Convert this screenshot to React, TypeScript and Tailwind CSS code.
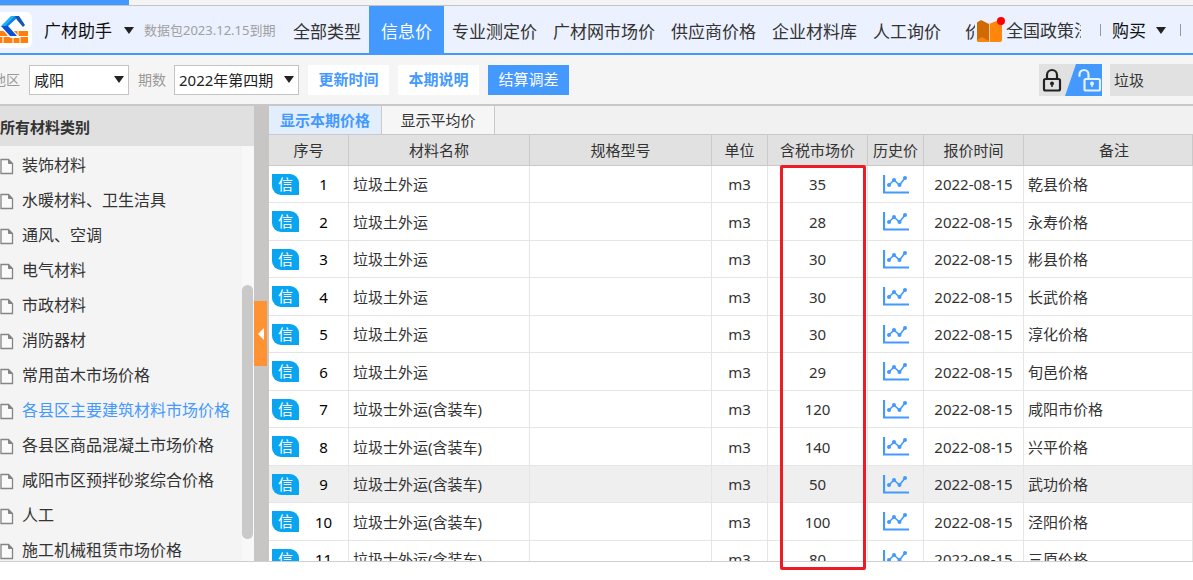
import { useState } from 'react';
import type { ReactNode } from 'react';

const navItems = ['全部类型', '信息价', '专业测定价', '广材网市场价', '供应商价格', '企业材料库', '人工询价'];

const categories = [
  '装饰材料',
  '水暖材料、卫生洁具',
  '通风、空调',
  '电气材料',
  '市政材料',
  '消防器材',
  '常用苗木市场价格',
  '各县区主要建筑材料市场价格',
  '各县区商品混凝土市场价格',
  '咸阳市区预拌砂浆综合价格',
  '人工',
  '施工机械租赁市场价格',
];

interface PriceRow {
  id: number;
  name: string;
  price: number;
  remark: string;
}

const rows: PriceRow[] = [
  { id: 1, name: '垃圾土外运', price: 35, remark: '乾县价格' },
  { id: 2, name: '垃圾土外运', price: 28, remark: '永寿价格' },
  { id: 3, name: '垃圾土外运', price: 30, remark: '彬县价格' },
  { id: 4, name: '垃圾土外运', price: 30, remark: '长武价格' },
  { id: 5, name: '垃圾土外运', price: 30, remark: '淳化价格' },
  { id: 6, name: '垃圾土外运', price: 29, remark: '旬邑价格' },
  { id: 7, name: '垃圾士外运(含装车)', price: 120, remark: '咸阳市价格' },
  { id: 8, name: '垃圾士外运(含装车)', price: 140, remark: '兴平价格' },
  { id: 9, name: '垃圾士外运(含装车)', price: 50, remark: '武功价格' },
  { id: 10, name: '垃圾士外运(含装车)', price: 100, remark: '泾阳价格' },
  { id: 11, name: '垃圾士外运(含装车)', price: 80, remark: '三原价格' },
];

function Caret({ className = '' }: { className?: string }) {
  return (
    <svg className={className} width="10" height="7" viewBox="0 0 10 7" aria-hidden="true">
      <path d="M0 0h10L5 7z" fill="#222" />
    </svg>
  );
}

function Logo() {
  return (
    <svg width="29" height="30" viewBox="0 0 29 30" aria-hidden="true">
      <path d="M0 16h28v12H0z" fill="#ff7f0e" />
      <path d="M0 21.5h28M8 16v5.5M18 16v5.5M3 21.5V28M13 21.5V28M20 21.5V28" stroke="#fff" strokeWidth="1" />
      <path d="M10 0h9L8 11l10 11h-7L0 11z" fill="#fff" stroke="#fff" strokeWidth="2" />
      <path d="M11 1h8L8 11H1z" fill="#1fb0f8" />
      <path d="M1 11h7l9 10h-7z" fill="#0a4fd6" />
      <path d="M15 1h4L8 11H5z" fill="#1280ea" />
      <path d="M15 1h4l6 9-2 2-6-7z" fill="#1257b5" />
    </svg>
  );
}

function BookIcon() {
  return (
    <svg width="29" height="28" viewBox="0 0 29 28" className="shrink-0" aria-hidden="true">
      <path d="M0 6.5L4 4l8 4v18H2q-2 0-2-2z" fill="#d06a05" />
      <path d="M12 8l10-4 3 3v17q0 2-2 2H12z" fill="#ff860d" />
      <path d="M0 24l5-3 7 4v1H2q-2 0-2-2z" fill="#f98510" />
      <path d="M12.5 8v18" stroke="#ffd09a" />
      <circle cx="24" cy="5" r="4" fill="#f00" />
    </svg>
  );
}

function FileIcon() {
  return (
    <svg width="14" height="17" viewBox="0 0 14 17" className="mt-1 shrink-0" aria-hidden="true">
      <path d="M1 1.5h7.5l4 4V15.500H1z" fill="#fafafa" stroke="#858585" strokeWidth="1.3" />
      <path d="M8.5 1.5v4h4z" fill="#858585" stroke="#858585" />
    </svg>
  );
}

function ChartIcon() {
  return (
    <svg width="26" height="19" viewBox="0 0 26 19" className="mx-auto" aria-hidden="true">
      <path d="M1 0v17.5h25" fill="none" stroke="#49f" strokeWidth="2.2" />
      <path d="M6 10l5-5 5.5 5L22 3" fill="none" stroke="#49f" strokeWidth="1.6" />
      <g fill="#49f">
        <circle cx="6" cy="10" r="2" />
        <circle cx="11" cy="5" r="2" />
        <circle cx="16.5" cy="10" r="2" />
        <circle cx="22" cy="3" r="2" />
      </g>
    </svg>
  );
}

function Picker({ id, className, children }: { id: string; className: string; children: ReactNode }) {
  return (
    <div className={`relative ${className}`}>
      <select id={id} className="h-[30px] w-full appearance-none border border-[#c4c4c4] bg-white pl-1 text-[15px] leading-5 text-[#222]">
        {children}
      </select>
      <Caret className="pointer-events-none absolute top-[11px] right-[5px]" />
    </div>
  );
}

function TopBar() {
  const [active, setActive] = useState('信息价');

  return (
    <header className="flex h-[50px] shrink-0 items-stretch overflow-hidden border-t border-b-2 border-t-[#c4c4c4] border-b-[#49f] bg-[#ebf1fe] text-[17px] whitespace-nowrap text-[#333]">
      <div className="flex w-[285px] shrink-0 items-center">
        <div className="flex h-9 w-8 shrink-0 items-center rounded-r-md bg-white">
          <Logo />
        </div>
        <button className="ml-3 flex items-center gap-3 pt-[2px] text-[#111]">
          广材助手
          <Caret />
        </button>
        <span className="ml-[10px] pt-[2px] text-[13px] text-[#a0a0a0]">数据包2023.12.15到期</span>
      </div>

      <nav className="flex shrink-0">
        {navItems.map((item) => (
          <a
            key={item}
            href="#"
            onClick={() => setActive(item)}
            className={`flex items-center pt-1 ${item === active ? 'bg-[#49f] px-3 text-white' : 'px-2'}`}
          >
            {item}
          </a>
        ))}
        <a href="#" className="ml-4 flex w-[10px] items-center overflow-hidden pt-1">价</a>
      </nav>

      <a href="#" className="ml-[2px] flex shrink-0 items-center">
        <BookIcon />
        <span className="w-[75px] overflow-hidden pt-[3px]">全国政策法</span>
      </a>

      <div className="ml-auto flex shrink-0 items-center">
        <span className="h-3 w-px bg-[#999]" />
        <button className="mr-[14px] ml-[11px] flex items-center gap-[10px] pt-[2px] text-[#111]">
          购买
          <Caret />
        </button>
        <span className="mr-3 h-3 w-px bg-[#999]" />
      </div>
    </header>
  );
}

function Toolbar() {
  const [keyword, setKeyword] = useState('垃圾');

  return (
    <div className="flex h-[49px] shrink-0 items-center overflow-hidden bg-[#f5f5f5] whitespace-nowrap">
      <label htmlFor="region" className="-ml-2 text-sm text-[#999]">地区</label>
      <Picker id="region" className="ml-[9px] w-[100px]">
        <option>咸阳</option>
      </Picker>
      <label htmlFor="period" className="ml-[9px] text-sm text-[#999]">期数</label>
      <Picker id="period" className="ml-2 w-[125px]">
        <option>2022年第四期</option>
      </Picker>
      <div className="ml-[9px] flex gap-[9px] text-[15px]">
        <button className="h-[30px] w-[81px] bg-white font-bold text-[#49f]">更新时间</button>
        <button className="h-[30px] w-[81px] bg-white font-bold text-[#49f]">本期说明</button>
        <button className="h-[30px] w-[81px] bg-[#49f] text-white">结算调差</button>
      </div>

      <div className="ml-auto flex h-8 shrink-0 bg-[#e1e1e1]">
        <button aria-label="锁定">
          <svg width="26" height="32" viewBox="0 0 26 32">
            <rect x="5" y="15" width="16" height="11.5" rx="1.5" fill="none" stroke="#222" strokeWidth="2.2" />
            <path d="M8 15v-4a5 5 0 0 1 10 0v4" fill="none" stroke="#222" strokeWidth="2.2" />
            <circle cx="13" cy="19.5" r="2" fill="#222" />
            <path d="M13 19v4" stroke="#222" strokeWidth="1.5" />
          </svg>
        </button>
        <button aria-label="解锁">
          <svg width="37" height="32" viewBox="0 0 37 32">
            <path d="M11 0h26v32H0z" fill="#49f" />
            <rect x="19.5" y="15" width="15.5" height="11.5" rx="1.5" fill="none" stroke="#e6f1ff" strokeWidth="2.2" />
            <path d="M14.500 12v-1.500a4.500 4.500 0 0 1 9 0V15" fill="none" stroke="#e6f1ff" strokeWidth="2.2" strokeLinecap="round" />
            <circle cx="27" cy="19.5" r="2" fill="#e6f1ff" />
            <path d="M27 19v4" stroke="#e6f1ff" strokeWidth="1.5" />
          </svg>
        </button>
      </div>
      <input
        aria-label="搜索材料"
        value={keyword}
        onChange={(e) => setKeyword(e.target.value)}
        className="ml-2 h-8 w-[83px] shrink-0 bg-[#e1e1e1] px-1 text-[15px] text-[#333]"
      />
    </div>
  );
}

function Sidebar() {
  const [selected, setSelected] = useState('各县区主要建筑材料市场价格');

  return (
    <aside className="flex w-[254px] shrink-0 flex-col bg-[#f4f4f4]">
      <h2 className="h-10 shrink-0 bg-[#e0e0e0] text-[15px] leading-[42px] font-bold text-[#333]">所有材料类别</h2>
      <div className="flex min-h-0 flex-1 overflow-hidden">
        <ul className="flex-1 text-base whitespace-nowrap text-[#333]">
          {categories.map((name) => (
            <li key={name}>
              <button
                onClick={() => setSelected(name)}
                className={`flex h-[35px] w-full items-center gap-2 pt-[2px] ${name === selected ? 'text-[#49f]' : ''}`}
              >
                <FileIcon />
                {name}
              </button>
            </li>
          ))}
        </ul>
        <div className="w-3 bg-[#f8f8f8] pt-[139px]">
          <div className="h-[254px] w-[11px] rounded-full bg-[#c9c9c9]" />
        </div>
      </div>
    </aside>
  );
}

function PriceTable() {
  return (
    <table className="w-full table-fixed border-separate border-spacing-0 text-[15px] leading-5 whitespace-nowrap text-[#333]">
      <colgroup>
        <col className="w-[80px]" />
        <col className="w-[181px]" />
        <col className="w-[182px]" />
        <col className="w-[56px]" />
        <col className="w-[100px]" />
        <col className="w-[56px]" />
        <col className="w-[100px]" />
        <col />
      </colgroup>
      <thead>
        <tr className="h-8 bg-[#e1e1e1] *:border-y *:border-r *:border-[#c9c9c9] *:p-0 *:font-normal">
          <th>序号</th>
          <th>材料名称</th>
          <th>规格型号</th>
          <th>单位</th>
          <th>含税市场价</th>
          <th>历史价</th>
          <th>报价时间</th>
          <th><span className="pl-3">备注</span></th>
        </tr>
      </thead>
      <tbody>
        {rows.map((row) => (
          <tr
            key={row.id}
            className={`odd:h-[37px] even:h-[38px] *:border-r *:border-b *:border-[#e5e5e5] *:py-0 ${row.id === 9 ? 'bg-[#efefef]' : 'bg-white'}`}
          >
            <td className="pl-[3px]">
              <div className="flex items-center">
                <span className="h-[21px] w-[27px] shrink-0 rounded-tr-[9px] rounded-bl-[9px] bg-[#0aa5f0] text-center leading-5 text-white">信</span>
                <span className="flex-1 text-center text-black">{row.id}</span>
              </div>
            </td>
            <td className="px-1">{row.name}</td>
            <td></td>
            <td className="text-center">m3</td>
            <td className="text-center">{row.price}</td>
            <td>
              <ChartIcon />
            </td>
            <td className="text-center">2022-08-15</td>
            <td className="px-1">{row.remark}</td>
          </tr>
        ))}
      </tbody>
    </table>
  );
}

export default function App() {
  return (
    <div className="flex h-screen flex-col overflow-hidden bg-white pb-[18px] font-['Noto_Sans','Noto_Sans_CJK_SC',sans-serif]">
      <div className="h-[5px] shrink-0 bg-[#f4f4f4]">
        <div className="h-full w-[129px] bg-[#49f]" />
      </div>
      <TopBar />
      <Toolbar />

      <main className="flex min-h-0 flex-1 border-t-2 border-b border-t-[#c8c8c8] border-b-[#cfcfcf]">
        <Sidebar />

        {/* Splitter with collapse handle */}
        <div className="flex w-[15px] shrink-0 items-center bg-[#c8c6c4]">
          <button aria-label="收起" className="flex h-[65px] w-[13px] items-center justify-center bg-[#ff9233]">
            <svg width="6" height="12" viewBox="0 0 6 12">
              <path d="M6 0v12L0 6z" fill="#fff" />
            </svg>
          </button>
        </div>

        <section className="relative flex min-w-0 flex-1 flex-col">
          <div className="flex h-7 shrink-0 bg-[#f1f1f1] text-[15px]">
            <button className="w-[113px] border-r border-[#c9c9c9] bg-[#e3eefd] font-bold text-[#49f]">显示本期价格</button>
            <button className="w-[113px] border-r border-[#c9c9c9] bg-[#f6f6f6] text-[#333]">显示平均价</button>
          </div>
          <div className="min-h-0 flex-1 overflow-hidden">
            <PriceTable />
          </div>

          {/* Highlight around the price column */}
          <div className="pointer-events-none absolute top-[59px] -bottom-[9px] left-[511px] w-[86px] rounded-xs border-3 border-[#ed1c24]" />
        </section>
      </main>
    </div>
  );
}
